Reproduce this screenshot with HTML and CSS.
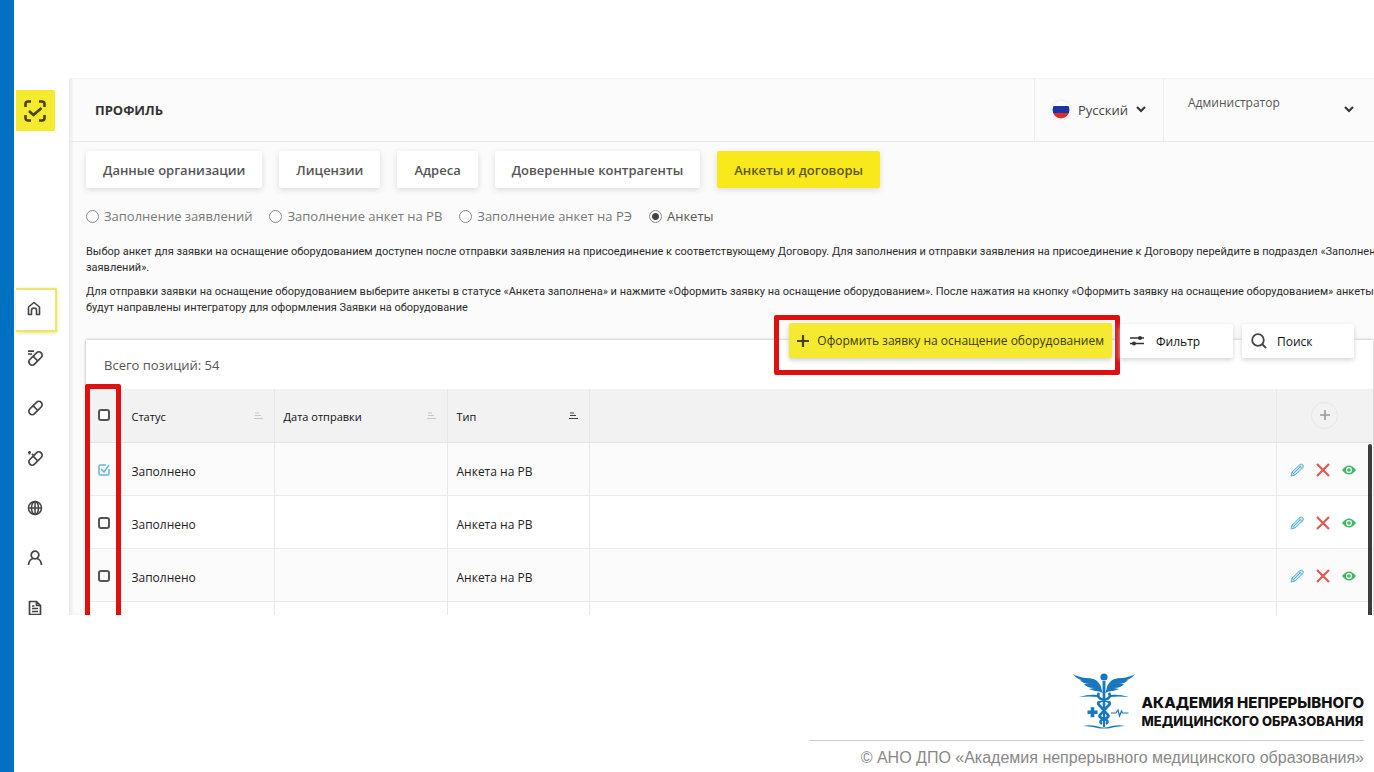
FILE: index.html
```html
<!DOCTYPE html>
<html lang="ru">
<head>
<meta charset="utf-8">
<title>Профиль — Анкеты и договоры</title>
<link rel="stylesheet" href="styles.css">
</head>
<body>
<svg class="sprite" aria-hidden="true">
  <symbol id="pencil" viewBox="0 0 14 14"><path d="M1 13l1-4 8-7.500q1.500-1 2.800.300 1.200 1.300.200 2.700l-8 7.500zM2 9l2.800 3M9 2.500l2.800 2.800M3.500 10.500l7-7" fill="#c9e6f5" stroke="#5badd9" stroke-width="1"/></symbol>
  <symbol id="cross" viewBox="0 0 14 14"><path d="M1 1l12 12M13 1L1 13" fill="none" stroke="#df5a54" stroke-width="2.200"/></symbol>
  <symbol id="eye" viewBox="0 0 14 10"><path d="M0 5q7-9 14 0q-7 9-14 0z" fill="#3dba63"/><circle cx="7" cy="5" r="3" fill="#fff"/><circle cx="7" cy="5" r="1.800" fill="#3dba63"/></symbol>
  <symbol id="sort" viewBox="0 0 9 8"><path d="M1 1h4M1 3.500h6M0 6.500h9" fill="none" stroke="currentColor" stroke-width="1.200"/></symbol>
  <symbol id="chevron" viewBox="0 0 10 7"><path d="M1 1l4 4 4-4" fill="none" stroke="#333" stroke-width="2"/></symbol>
</svg>
<div class="slide">
  <div class="stage">
    <div class="app">
      <nav class="sidebar" aria-label="Разделы">
        <a class="brand" href="#" aria-label="Главная"><svg width="22" height="22" viewBox="0 0 22 22"><path d="M1.500 7V4q0-2.500 2.500-2.500H7M15 1.500h3q2.500 0 2.500 2.500V7M20.500 15v3q0 2.500-2.500 2.500H15M7 20.500H4q-2.500 0-2.500-2.500V15M5 11l4.500 4L17.500 8" fill="none" stroke="#45430f" stroke-width="2.600"/></svg></a>
        <a class="nav-item active" href="#" aria-label="Профиль"><svg width="14" height="15" viewBox="0 0 14 15"><path d="M1.500 6L7 1.500 12.500 6V13.500H9.500V9.500Q9.500 7 7 7T4.500 9.500V13.500H1.500z" fill="none" stroke="#444" stroke-width="1.600" stroke-linejoin="round"/></svg></a>
        <a class="nav-item" href="#" aria-label="Заказы"><svg width="16" height="16" viewBox="0 0 16 16"><g fill="none" stroke="#444" stroke-width="1.700"><rect x="-8" y="-3.300" width="16" height="6.600" rx="3.300" transform="translate(8.500 8.500) rotate(-45)"/><path d="M6 6.200l4.800 4.800M1 1.200h6M1 4h4"/></g></svg></a>
        <a class="nav-item" href="#" aria-label="Лекарства"><svg width="16" height="16" viewBox="0 0 16 16"><g fill="none" stroke="#444" stroke-width="1.700"><rect x="-8" y="-3.300" width="16" height="6.600" rx="3.300" transform="translate(8.500 8) rotate(-45)"/><path d="M6 5.700l4.800 4.800"/></g></svg></a>
        <a class="nav-item" href="#" aria-label="Препараты"><svg width="16" height="16" viewBox="0 0 16 16"><g fill="none" stroke="#444" stroke-width="1.700"><rect x="-8" y="-3.300" width="16" height="6.600" rx="3.300" transform="translate(8.500 8.500) rotate(-45)"/><path d="M6 6.200l4.800 4.800M2.500 1v3.500M1 2.500h3M5 4l1.500 1.500"/></g></svg></a>
        <a class="nav-item" href="#" aria-label="Сайт"><svg width="16" height="16" viewBox="0 0 16 16"><g fill="none" stroke="#444" stroke-width="1.500"><circle cx="8" cy="8" r="6.500"/><ellipse cx="8" cy="8" rx="3.500" ry="6.500"/><path d="M8 1.500v13M1.500 8h13"/></g></svg></a>
        <a class="nav-item" href="#" aria-label="Пользователь"><svg width="16" height="16" viewBox="0 0 16 16"><g fill="none" stroke="#444" stroke-width="1.800"><circle cx="8" cy="5" r="3.800"/><path d="M1.500 15q.5-5.500 4.500-6.500M14.500 15q-.5-5.500-4.500-6.500"/></g></svg></a>
        <a class="nav-item" href="#" aria-label="Документы"><svg width="14" height="16" viewBox="0 0 14 16"><path d="M1.500 1.500h7l4 4v9h-11zM8.500 1.500v4h4M4 6h2.500M4 8.500h6M4 11.500h6" fill="none" stroke="#444" stroke-width="1.700" stroke-linejoin="round"/></svg></a>
      </nav>
      <main class="main">
        <header class="topbar">
          <h1>ПРОФИЛЬ</h1>
          <button class="language" type="button"><svg width="18" height="18" viewBox="0 0 18 18"><defs><clipPath id="disc"><circle cx="9" cy="9" r="8.500"/></clipPath></defs><g clip-path="url(#disc)"><path fill="#fff" d="M0 0h18v5H0z"/><path fill="#1935a8" d="M0 5h18v7H0z"/><path fill="#dc2d28" d="M0 12h18v6H0z"/></g></svg><span>Русский</span><svg width="10" height="7"><use href="#chevron"/></svg></button>
          <button class="account" type="button"><span>Администратор</span><svg width="10" height="7"><use href="#chevron"/></svg></button>
        </header>
        <div class="tabs">
          <button type="button">Данные организации</button>
          <button type="button">Лицензии</button>
          <button type="button">Адреса</button>
          <button type="button">Доверенные контрагенты</button>
          <button type="button" class="selected">Анкеты и договоры</button>
        </div>
        <div class="modes">
          <label><input type="radio" name="mode">Заполнение заявлений</label>
          <label><input type="radio" name="mode">Заполнение анкет на РВ</label>
          <label><input type="radio" name="mode">Заполнение анкет на РЭ</label>
          <label><input type="radio" name="mode" checked>Анкеты</label>
        </div>
        <div class="notes">
          <p>Выбор анкет для заявки на оснащение оборудованием доступен после отправки заявления на присоединение к соответствующему Договору. Для заполнения и отправки заявления на присоединение к Договору перейдите в подраздел «Заполнение<br>заявлений».</p>
          <p>Для отправки заявки на оснащение оборудованием выберите анкеты в статусе «Анкета заполнена» и нажмите «Оформить заявку на оснащение оборудованием». После нажатия на кнопку «Оформить заявку на оснащение оборудованием» анкеты<br>будут направлены интегратору для оформления Заявки на оборудование</p>
        </div>
        <section class="card">
          <div class="actions">
            <div class="marked"><button class="order" type="button"><svg width="12" height="12" viewBox="0 0 12 12"><path d="M6 0v12M0 6h12" stroke="#45430f" stroke-width="2.200"/></svg><span>Оформить заявку на оснащение оборудованием</span></button></div>
            <button class="tool filter" type="button"><svg width="16" height="12" viewBox="0 0 16 12"><path d="M1 3h14M1 8.500h14" stroke="#333" stroke-width="1.600"/><circle cx="11" cy="3" r="2" fill="#333"/><circle cx="5" cy="8.500" r="2" fill="#333"/></svg><span>Фильтр</span></button>
            <button class="tool search" type="button"><svg width="16" height="16" viewBox="0 0 16 16"><circle cx="7" cy="7" r="5.800" fill="none" stroke="#444" stroke-width="1.800"/><path d="M11 11l4 4" stroke="#444" stroke-width="1.800"/></svg><span>Поиск</span></button>
          </div>
          <p class="total">Всего позиций: 54</p>
          <div class="grid-wrap">
            <table>
              <colgroup><col class="c-check"><col class="c-status"><col class="c-date"><col class="c-type"><col><col class="c-tools"></colgroup>
              <thead><tr>
                <th><input type="checkbox" aria-label="Выбрать все"></th>
                <th><div class="head">Статус<svg width="9" height="8"><use href="#sort"/></svg></div></th>
                <th><div class="head">Дата отправки<svg width="9" height="8"><use href="#sort"/></svg></div></th>
                <th><div class="head sorted">Тип<svg width="9" height="8"><use href="#sort"/></svg></div></th>
                <th></th>
                <th><button class="add" type="button" aria-label="Добавить столбец"><svg width="10" height="10" viewBox="0 0 10 10"><path d="M5 0v10M0 5h10" stroke="#999" stroke-width="1.600"/></svg></button></th>
              </tr></thead>
              <tbody>
                <tr><td><input type="checkbox" aria-label="Строка 1" checked></td><td>Заполнено</td><td></td><td>Анкета на РВ</td><td></td><td><div class="tools"><button type="button" aria-label="Изменить"><svg width="14" height="14"><use href="#pencil"/></svg></button><button type="button" aria-label="Удалить"><svg width="14" height="14"><use href="#cross"/></svg></button><button type="button" aria-label="Просмотр"><svg width="14" height="10"><use href="#eye"/></svg></button></div></td></tr>
                <tr><td><input type="checkbox" aria-label="Строка 2"></td><td>Заполнено</td><td></td><td>Анкета на РВ</td><td></td><td><div class="tools"><button type="button" aria-label="Изменить"><svg width="14" height="14"><use href="#pencil"/></svg></button><button type="button" aria-label="Удалить"><svg width="14" height="14"><use href="#cross"/></svg></button><button type="button" aria-label="Просмотр"><svg width="14" height="10"><use href="#eye"/></svg></button></div></td></tr>
                <tr><td><input type="checkbox" aria-label="Строка 3"></td><td>Заполнено</td><td></td><td>Анкета на РВ</td><td></td><td><div class="tools"><button type="button" aria-label="Изменить"><svg width="14" height="14"><use href="#pencil"/></svg></button><button type="button" aria-label="Удалить"><svg width="14" height="14"><use href="#cross"/></svg></button><button type="button" aria-label="Просмотр"><svg width="14" height="10"><use href="#eye"/></svg></button></div></td></tr>
                <tr><td></td><td></td><td></td><td></td><td></td><td></td></tr>
              </tbody>
            </table>
            <div class="scroll-thumb"></div>
            <div class="column-mark"></div>
          </div>
        </section>
      </main>
    </div>
    <footer class="footer">
      <div class="logo">
        <svg width="64" height="56" viewBox="0 0 64 56" aria-hidden="true">
          <g fill="#1878bd"><circle cx="32" cy="4" r="3.600"/>
          <path d="M1 1q5 3 13 4 9 0 12 4 3 3 4 9l1 2q-3-2-8-2l-6-2 5-1q-7 0-10-4l6 0Q11 11 8 7l6 1Q5 7 1 1zM63 1q-5 3-13 4-9 0-12 4-3 3-4 9l-1 2q3-2 8-2l6-2-5-1q7 0 10-4l-6 0q7 0 10-4l-6 1q9-1 13-7z"/>
          <path d="M30.500 8h3l-.5 46h-2zM7 24q10-3 19-2v2q-9-1-19 0zM57 24q-10-3-19-2v2q9-1 19 0zM15.500 37.500h3.200v-3.200h3.600v3.200h3.200v3.600h-3.200v3.200h-3.600v-3.200h-3.200zM11 53q8-2 17 1 4 1 8 0 9-3 17-1-9 0-17 2.500h-8Q20 53 11 53z"/></g>
          <path d="M27 20q-3 5 5 7t5 5-5 5.500-4 4.500 4 4 2 5M37 20q3 5-5 7t-5 5 5 5.500 4 4.500-4 4-2 5" fill="none" stroke="#1878bd" stroke-width="2.600"/>
          <path d="M39 40h5l2-3 1.500 6 2-5 1 2h6" fill="none" stroke="#1878bd" stroke-width="1.200"/>
        </svg>
        <p><span class="line-one">АКАДЕМИЯ НЕПРЕРЫВНОГО</span><span class="line-two">МЕДИЦИНСКОГО ОБРАЗОВАНИЯ</span></p>
      </div>
      <p class="copyright">© АНО ДПО «Академия непрерывного медицинского образования»</p>
    </footer>
  </div>
</div>
</body>
</html>
```

FILE: styles.css
```css
* { box-sizing: border-box; }
body { margin: 0; background: #fff; color: #222; font-family: "Open Sans", "Noto Sans", sans-serif; font-size: 12px; }
h1, p { margin: 0; }
button { margin: 0; padding: 0; border: 0; background: none; font: inherit; color: inherit; }
svg { display: block; flex: none; }
.sprite { position: absolute; width: 0; height: 0; }

.slide { height: 100vh; border-left: 14px solid #0070c0; }
.stage { height: 100%; display: flex; flex-direction: column; padding-top: 78px; }
.app { flex: 1; min-height: 0; overflow: hidden; display: flex; }

.sidebar { flex: none; width: 55px; display: flex; flex-direction: column; padding: 12px 12px 0 2px; }
.brand { display: flex; flex: none; align-items: center; justify-content: center; width: 39px; height: 41px; margin-bottom: 157px; padding-right: 2px; background: #f6ea30; border-radius: 0 2px 2px 0; }
.nav-item { display: flex; flex: none; align-items: center; justify-content: center; width: 38px; height: 50px; }
.nav-item.active { width: 41px; height: 44px; margin-bottom: 1px; padding-right: 4px; padding-bottom: 4px; border: 2px solid #ece66c; border-left: 0; box-shadow: 0 1px 4px #e8e28a; }

.main { flex: 1; min-width: 0; overflow: hidden; background: #fbfbfb; box-shadow: inset 3px 0 3px #ececec; }
.topbar { display: flex; height: 64px; border-bottom: 1px solid #e8e8e8; }
.topbar h1 { flex: 1; padding-left: 26px; font-size: 13px; line-height: 64px; font-weight: 700; color: #333; }
.language { display: flex; align-items: center; gap: 8px; width: 129px; padding-left: 17px; border-left: 1px solid #ededed; font-size: 13px; color: #444; }
.language svg:first-child { border-radius: 50%; box-shadow: 0 0 4px #e4e4e4; }
.account { display: flex; align-items: center; justify-content: space-between; width: 211px; padding: 0 20px 0 24px; border-left: 1px solid #ededed; color: #555; }
.account span { padding-bottom: 14px; }

.tabs { display: flex; gap: 17px; padding: 9px 0 0 17px; }
.tabs button { height: 37px; padding: 0 17px; border-radius: 2px; background: #fff; box-shadow: 0 2px 6px #dcdcdc; font-size: 13px; font-weight: 600; color: #555; }
.tabs .selected { background: #f8e91c; color: #5d5814; }

.modes { display: flex; gap: 17px; padding: 17px 0 0 17px; font-size: 13px; line-height: 22px; color: #777; }
.modes label { display: flex; align-items: center; gap: 5px; }
.modes label:last-child { color: #555; }
.modes input { appearance: none; flex: none; width: 13px; height: 13px; margin: 0; border: 1px solid #888; border-radius: 50%; background: #fff; }
.modes input:checked { background: radial-gradient(circle, #444 0 3px, #fff 4px); }

.notes { padding: 17px 0 0 17px; font-family: Roboto, "Open Sans", sans-serif; font-size: 11px; line-height: 16px; color: #2b2b2b; white-space: nowrap; }
.notes p { margin-bottom: 8px; }

.card { position: relative; margin: 24px 1px 0 17px; padding-top: 10px; background: #fff; box-shadow: 0 0 3px #aaa; }
.actions { position: absolute; top: -25px; right: 19px; display: flex; align-items: flex-start; }
.marked { padding: 3px 3px 12px 10px; border: 5px solid #df1010; border-radius: 2px; }
.order { display: flex; align-items: center; gap: 8px; height: 35px; padding: 0 8px; border-radius: 2px; background: #f5ea30; box-shadow: 0 2px 5px #ccc; color: #3c3908; }
.tool { display: flex; align-items: center; height: 34px; margin-top: 9px; border-radius: 2px; background: #fff; box-shadow: 0 2px 5px #d4d4d4; color: #111; }
.filter { width: 113px; gap: 11px; padding-left: 9px; }
.search { width: 112px; gap: 10px; margin-left: 9px; padding-left: 9px; }
.total { padding-left: 18px; font-size: 13px; line-height: 30px; color: #555; }

.grid-wrap { position: relative; margin-top: 9px; }
table { width: 100%; table-layout: fixed; border-collapse: collapse; }
.c-check { width: 36px; }
.c-status { width: 152px; }
.c-date { width: 173px; }
.c-type { width: 142px; }
.c-tools { width: 97px; }
th, td { padding: 0 9px; border-right: 1px solid #e8e8e8; text-align: left; }
th:last-child, td:last-child { border-right: 0; }
th { height: 53px; background: #f2f2f2; border-bottom: 1px solid #e3e3e3; color: #111; font-size: 11px; font-weight: 400; }
td { height: 53px; padding-top: 6px; border-bottom: 1px solid #ebebeb; font-size: 12px; }
td:first-child, td:last-child { padding-top: 2px; }
tbody tr:nth-child(odd) { background: #fbfbfb; }
th:first-child, td:first-child { padding-left: 12px; padding-right: 0; border-right-color: transparent; }
.head { display: flex; align-items: center; justify-content: space-between; padding: 2px 2px 0 0; }
.head svg { color: #c8c8c8; }
.head.sorted svg { color: #444; }
input[type="checkbox"] { appearance: none; display: block; width: 12px; height: 12px; margin: 0; border: 2px solid #555; border-radius: 3px; background: #fff; }
input[type="checkbox"]:checked { border: 0; background: url("data:image/svg+xml,%3Csvg xmlns='http://www.w3.org/2000/svg' viewBox='0 0 12 12'%3E%3Cpath d='M11 5v6H1V1h7M3 5l3 3 5-7' fill='none' stroke='%2366b2dc' stroke-width='1.500'/%3E%3C/svg%3E") center / 12px 12px no-repeat; }
.add { display: flex; align-items: center; justify-content: center; width: 27px; height: 27px; margin: 0 auto; border: 1px solid #e6e6e6; border-radius: 50%; }
.tools { display: flex; align-items: center; gap: 12px; padding-left: 4px; }
.scroll-thumb { position: absolute; top: 55px; right: 1px; bottom: 0; width: 4px; border-radius: 2px; background: #3c3c3c; }
.column-mark { position: absolute; top: -5px; left: -1px; bottom: 0; width: 36px; border: 5px solid #df1010; border-radius: 2px; }

.footer { flex: none; display: flex; flex-direction: column; align-items: flex-end; height: 157px; padding: 58px 10px 0 0; }
.logo { display: flex; gap: 6px; height: 67px; }
.logo p { display: flex; flex-direction: column; padding-top: 21px; color: #111; font-family: Inter, "Open Sans", sans-serif; font-weight: 800; line-height: 18px; }
.line-one { font-size: 15px; }
.line-two { font-size: 13px; }
.copyright { padding: 6px 0 0 52px; border-top: 1px solid #ccc; font-family: "Liberation Sans", Arial, sans-serif; font-size: 16px; line-height: 22px; color: #888; }
```
